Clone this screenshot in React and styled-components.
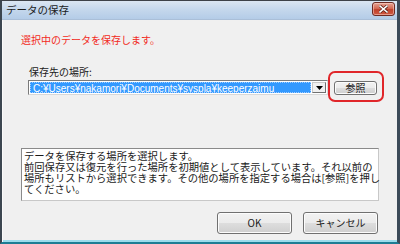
import React from "react";
import styled, { createGlobalStyle } from "styled-components";

const Global = createGlobalStyle`
  html, body { margin: 0; padding: 0; background: #f0f0f0; }
  body { font-family: "Noto Sans CJK JP", "Noto Sans", sans-serif; }
  * { box-sizing: border-box; }
`;

const Window = styled.div`
  width: 400px;
  height: 244px;
  display: flex;
  flex-direction: column;
  background: #f0f0f0;
  border-top: 1px solid #3e4248;
  border-left: 2px solid #3c4650;
  border-right: 3px solid #3c4a58;
  border-bottom: 2px solid #1d7d94;
  box-shadow: inset 1px 0 0 #fafafa, inset 0 -2px 0 #9cdcec;
  overflow: hidden;
`;

const TitleBar = styled.div`
  height: 19px;
  flex: none;
  display: flex;
  align-items: center;
  justify-content: space-between;
  padding: 0 2px 0 4px;
  background: linear-gradient(#dbe6f2, #c4d7ec 50%, #b4cce7);
  border-bottom: 1px solid #aabfd8;
`;

const Title = styled.span`
  font-size: 10.5px;
  line-height: 12px;
  color: #1b1b1b;
`;

const CloseButton = styled.div`
  width: 23px;
  height: 14px;
  margin-top: -2px;
  border: 1px solid #6e2a22;
  border-radius: 3px;
  background: linear-gradient(#e6a394, #d46a55 45%, #c0412b 55%, #cf5a43);
  display: flex;
  align-items: center;
  justify-content: center;
  box-shadow: inset 0 0 0 1px rgba(255, 220, 210, 0.5);
`;

const Content = styled.div`
  flex: 1;
  display: flex;
  flex-direction: column;
  padding: 14px 18px 0 19px;
  font-size: 10px;
`;

const Message = styled.div`
  color: #f22a22;
  line-height: 12px;
  height: 12px;
  white-space: nowrap;
`;

const Label = styled.div`
  margin: 20px 0 0 8px;
  line-height: 12px;
  color: #1a1a1a;
  white-space: nowrap;
`;

const Row = styled.div`
  display: flex;
  align-items: flex-start;
  margin: 2px 0 0 7px;
  height: 15px;
`;

const Combo = styled.div`
  width: 300px;
  height: 15px;
  display: flex;
  background: #fff;
  border: 1px solid #7a7a7a;
  border-right-color: #d8d8d8;
  border-bottom-color: #d8d8d8;
  padding: 1px;
`;

const Selected = styled.div`
  flex: 1;
  background: #3399ff;
  color: #fff;
  font-family: "Liberation Sans", "Noto Sans CJK JP", sans-serif;
  font-size: 10px;
  line-height: 11px;
  padding-left: 2px;
  white-space: nowrap;
  overflow: hidden;
  border: 1px dotted #a0ccff;
`;

const DropButton = styled.div`
  width: 14px;
  flex: none;
  margin-left: 1px;
  background: #f0f0f0;
  border: 1px solid #c8c8c8;
  border-right-color: #707070;
  border-bottom-color: #707070;
  display: flex;
  align-items: center;
  justify-content: center;
`;

const BrowseWrap = styled.div`
  position: relative;
  margin-left: 6px;
`;

const Highlight = styled.div`
  position: absolute;
  left: -6px;
  right: -7px;
  top: -9px;
  bottom: -7px;
  border: 2px solid #e0262a;
  border-radius: 7px;
  pointer-events: none;
`;

const Button = styled.div`
  width: ${(p) => p.$w}px;
  height: ${(p) => p.$h}px;
  margin-top: ${(p) => p.$mt || 0}px;
  display: flex;
  align-items: center;
  justify-content: center;
  border: 1px solid #707070;
  border-radius: 3px;
  background: linear-gradient(#f2f2f2, #ebebeb 50%, #dddddd 51%, #cfcfcf);
  box-shadow: inset 0 0 0 1px #fcfcfc;
  color: #1a1a1a;
  font-size: 10px;
  line-height: 12px;
  white-space: nowrap;
`;

const InfoBox = styled.div`
  margin-top: 53px;
  height: 53px;
  width: 358px;
  background: #fff;
  border: 1px solid #8a8a8a;
  border-right-color: #c8c8c8;
  border-bottom-color: #c8c8c8;
  padding: 1px 0 0 2px;
  font-size: 10.3px;
  line-height: 11px;
  color: #1a1a1a;
`;

const InfoLine = styled.div`
  white-space: nowrap;
  height: 11px;
`;

const Footer = styled.div`
  display: flex;
  justify-content: flex-end;
  gap: 11px;
  margin-top: 11px;
  padding-right: 1px;
`;

const infoLines = [
  "データを保存する場所を選択します。",
  "前回保存又は復元を行った場所を初期値として表示しています。それ以前の",
  "場所もリストから選択できます。その他の場所を指定する場合は[参照]を押し",
  "てください。",
];

export default function App() {
  return (
    <>
      <Global />
      <Window>
        <TitleBar>
          <Title>データの保存</Title>
          <CloseButton>
            <svg width="9" height="8" viewBox="0 0 9 8">
              <path d="M1 1 L8 7 M8 1 L1 7" stroke="#5a2018" strokeWidth="3" strokeLinecap="square" />
              <path d="M1 1 L8 7 M8 1 L1 7" stroke="#ffffff" strokeWidth="1.6" strokeLinecap="square" />
            </svg>
          </CloseButton>
        </TitleBar>
        <Content>
          <Message>選択中のデータを保存します。</Message>
          <Label>保存先の場所:</Label>
          <Row>
            <Combo>
              <Selected>C:¥Users¥nakamori¥Documents¥syspla¥keeperzaimu</Selected>
              <DropButton>
                <svg width="7" height="4" viewBox="0 0 7 4">
                  <path d="M0 0 H7 L3.5 4 Z" fill="#000" />
                </svg>
              </DropButton>
            </Combo>
            <BrowseWrap>
              <Button $w={43} $h={14} $mt={1}>参照</Button>
              <Highlight />
            </BrowseWrap>
          </Row>
          <InfoBox>
            {infoLines.map((l, i) => (
              <InfoLine key={i}>{l}</InfoLine>
            ))}
          </InfoBox>
          <Footer>
            <Button $w={75} $h={22}>OK</Button>
            <Button $w={75} $h={22}>キャンセル</Button>
          </Footer>
        </Content>
      </Window>
    </>
  );
}
